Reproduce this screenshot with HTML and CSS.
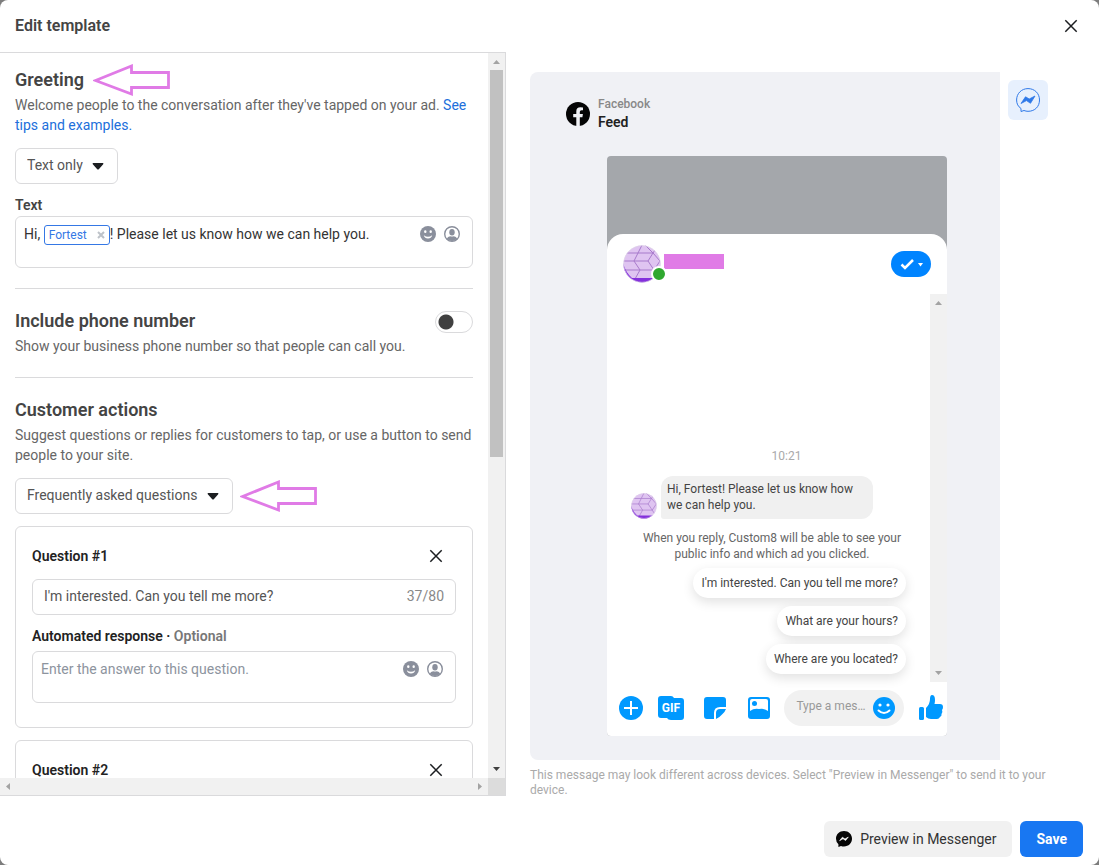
FILE: index.html
```html
<!DOCTYPE html>
<html lang="en">
<head>
<meta charset="utf-8">
<meta name="viewport" content="width=device-width, initial-scale=1">
<title>Edit template</title>
<link rel="stylesheet" href="styles.css">
</head>
<body>
<svg class="defs" width="0" height="0" aria-hidden="true">
  <symbol id="close" viewBox="0 0 14 14"><path d="M1.3 1.3 12.7 12.7M12.7 1.3 1.3 12.7" fill="none" stroke="#1c1e21" stroke-width="1.5"/></symbol>
  <symbol id="arrow" viewBox="0 0 78 32"><path d="M2.5 16.5 38.500 2V8.500H75.500V23.500H38.500V30Z" fill="#fff" stroke="#e07be6" stroke-width="2.8"/></symbol>
  <symbol id="smile" viewBox="0 0 16 16"><circle cx="8" cy="8" r="8" fill="currentColor"/><ellipse cx="5.300" cy="5.700" rx="1.200" ry="1.400" fill="#fff"/><ellipse cx="10.700" cy="5.700" rx="1.200" ry="1.400" fill="#fff"/><path d="M3.800 9.200Q8 12.400 12.200 9.200Q11.300 12.400 8 12.400T3.800 9.200Z" fill="#fff"/></symbol>
  <symbol id="person" viewBox="0 0 16 16"><circle cx="8" cy="8" r="7.300" fill="none" stroke="currentColor" stroke-width="1.400"/><ellipse cx="8" cy="6.300" rx="2.700" ry="3.200" fill="currentColor"/><path d="M2.800 12.800Q3.600 10.300 6.200 10.200Q8 11 9.800 10.200Q12.400 10.300 13.200 12.800Q11 15 8 15T2.800 12.800Z" fill="currentColor"/></symbol>
  <symbol id="avatar" viewBox="0 0 38 38">
    <clipPath id="round"><circle cx="19" cy="19" r="18.500"/></clipPath>
    <g clip-path="url(#round)">
      <path d="M0 0H38V38H0Z" fill="#dfc4f1"/>
      <path d="M0 8H15L19 0M15 8H30L37 16M0 16H11L17 25H31L37 16M0 25H17L12 34M31 25 37 34M15 8 11 16M30 8 25 16H11M25 16 31 25M22 0 30 8 34 2" fill="none" stroke="#a77acb" stroke-width="1"/>
      <path d="M0 18Q3 28 9 33H38V38H0Z" fill="#8430dc"/>
    </g>
    <circle cx="19" cy="19" r="18.300" fill="none" stroke="#ddd3e6" stroke-width=".7"/>
  </symbol>
</svg>
<div class="dialog" role="dialog" aria-labelledby="title">
  <header class="dialog-head">
    <h1 id="title">Edit template</h1>
    <button class="icon-btn" aria-label="Close"><svg width="14" height="14"><use href="#close"/></svg></button>
  </header>
  <div class="main">
    <div class="pane">
      <div class="pane-content">
        <section class="section first">
          <div class="heading-row"><h2>Greeting</h2><svg class="arrow" width="78" height="32"><use href="#arrow"/></svg></div>
          <p class="desc">Welcome people to the conversation after they've tapped on your ad. <a href="#">See tips and examples.</a></p>
          <div class="select-row">
            <span class="select-wrap"><select aria-label="Greeting type"><option>Text only</option></select><svg class="caret" width="12" height="7"><path d="M1 0H11Q12 .5 11 1.500L7 6Q6 7 5 6L1 1.500Q0 .5 1 0Z" fill="#1c1e21"/></svg></span>
          </div>
          <div class="label" id="greet">Text</div>
          <div class="editor">
            <div class="editor-text" role="textbox" aria-labelledby="greet" contenteditable="true">Hi, <span class="token" contenteditable="false">Fortest <svg width="8" height="8"><path d="M1 1 7 7M7 1 1 7" stroke="#bec3c9" stroke-width="2"/></svg></span>! Please let us know how we can help you.</div>
            <div class="tools"><button aria-label="Emoji"><svg width="16" height="16"><use href="#smile"/></svg></button><button aria-label="Personalise"><svg width="16" height="16"><use href="#person"/></svg></button></div>
          </div>
        </section>
        <section class="section phone-section">
          <div class="heading-row spread"><h2><label for="phone">Include phone number</label></h2><input type="checkbox" class="toggle" id="phone"></div>
          <p class="desc">Show your business phone number so that people can call you.</p>
        </section>
        <section class="section">
          <h2>Customer actions</h2>
          <p class="desc">Suggest questions or replies for customers to tap, or use a button to send people to your site.</p>
          <div class="select-row">
            <span class="select-wrap"><select aria-label="Customer action"><option>Frequently asked questions</option></select><svg class="caret" width="12" height="7"><path d="M1 0H11Q12 .5 11 1.500L7 6Q6 7 5 6L1 1.500Q0 .5 1 0Z" fill="#1c1e21"/></svg></span>
            <svg class="arrow" width="78" height="32"><use href="#arrow"/></svg>
          </div>
          <div class="card">
            <div class="card-head"><label for="q1">Question #1</label><button class="icon-btn" aria-label="Remove question 1"><svg width="14" height="14"><use href="#close"/></svg></button></div>
            <div class="field"><input type="text" id="q1" value="I'm interested. Can you tell me more?"><span class="count">37/80</span></div>
            <label class="label response" for="a1">Automated response · <span class="optional">Optional</span></label>
            <div class="editor"><textarea id="a1" rows="1" placeholder="Enter the answer to this question."></textarea>
              <div class="tools"><button aria-label="Emoji"><svg width="16" height="16"><use href="#smile"/></svg></button><button aria-label="Personalise"><svg width="16" height="16"><use href="#person"/></svg></button></div>
            </div>
          </div>
          <div class="card">
            <div class="card-head"><label for="q2">Question #2</label><button class="icon-btn" aria-label="Remove question 2"><svg width="14" height="14"><use href="#close"/></svg></button></div>
            <div class="field"><input type="text" id="q2"></div>
          </div>
        </section>
      </div>
      <div class="bar-v"><svg width="17" height="17"><path d="M5 11H12L8.500 7Z" fill="#a3a3a3"/></svg><div class="track"><div class="thumb"></div></div><svg width="17" height="17"><path d="M5 6H12L8.500 10Z" fill="#404040"/></svg></div>
      <div class="bar-h"><svg width="17" height="17"><path d="M10 5V12L6 8.500Z" fill="#a3a3a3"/></svg><svg width="17" height="17"><path d="M7 5V12L11 8.500Z" fill="#a3a3a3"/></svg></div>
      <div class="corner"></div>
    </div>
    <div class="preview">
      <div class="preview-row">
        <div class="stage">
          <div class="placement">
            <svg width="24" height="24" viewBox="0 0 24 24"><circle cx="12" cy="12" r="12" fill="#050505"/><path d="M10.300 24V15.300H7.200V12H10.300V9.400Q10.300 5.200 14.400 5.200Q16 5.200 17 5.500V8.300H15.500Q13.800 8.300 13.800 10V12H16.900L16.400 15.300H13.800V24Z" fill="#f0f1f5"/></svg>
            <div><div class="platform">Facebook</div><div class="spot">Feed</div></div>
          </div>
          <div class="phone">
            <div class="sheet">
              <div class="chat-head">
                <div class="avatar"><svg width="38" height="38"><use href="#avatar"/></svg><span class="online"></span></div>
                <div class="name"></div>
                <button class="pill" aria-label="Options"><svg width="40" height="26"><path d="M10.500 13.500 14 17 22 9" fill="none" stroke="#fff" stroke-width="2.500"/><path d="M27 12H32L29.500 15.500Z" fill="#fff"/></svg></button>
              </div>
              <div class="chat-body">
                <div class="messages">
                  <div class="time">10:21</div>
                  <div class="incoming"><svg width="26" height="26"><use href="#avatar"/></svg><div class="bubble">Hi, Fortest! Please let us know how we can help you.</div></div>
                  <p class="notice">When you reply, Custom8 will be able to see your public info and which ad you clicked.</p>
                  <div class="replies"><button>I'm interested. Can you tell me more?</button><button>What are your hours?</button><button>Where are you located?</button></div>
                </div>
                <div class="bar-v chat-bar"><svg width="17" height="17"><path d="M5 11H12L8.500 7Z" fill="#a3a3a3"/></svg><svg width="17" height="17"><path d="M5 6H12L8.500 10Z" fill="#a3a3a3"/></svg></div>
              </div>
              <div class="composer">
                <button aria-label="More"><svg width="24" height="24"><circle cx="12" cy="12" r="12" fill="#0099ff"/><path d="M5 12H19M12 5V19" stroke="#fff" stroke-width="2"/></svg></button>
                <button class="gif" aria-label="GIF"><svg width="26" height="24"><path d="M3 0H13Q15 0 16 2H23Q26 2 26 5V21Q26 24 23 24H13Q10 24 9 22H3Q0 22 0 19V3Q0 0 3 0Z" fill="#0099ff"/><text x="13" y="16">GIF</text></svg></button>
                <button class="sticker" aria-label="Sticker"><svg width="22" height="22"><path d="M3 0H19Q22 0 22 3V10H16Q10 10 10 16V22H3Q0 22 0 19V3Q0 0 3 0Z" fill="#0099ff"/><path d="M12 22V16Q12 12 16 12H22Q21 15 18 17.500Q15 21 12 22Z" fill="#0099ff"/></svg></button>
                <button aria-label="Photo"><svg width="22" height="22"><path d="M3 0H19Q22 0 22 3V19Q22 22 19 22H3Q0 22 0 19V3Q0 0 3 0Z" fill="#0099ff"/><path d="M2 4Q2 2 4 2H18Q20 2 20 4V14Q16 11 11 12Q6 11 2 14Z" fill="#fff"/><circle cx="6.500" cy="6.500" r="2.500" fill="#0099ff"/></svg></button>
                <div class="type"><input type="text" aria-label="Message" placeholder="Type a message..."><svg width="22" height="22" viewBox="0 0 22 22"><circle cx="11" cy="11" r="11" fill="#0099ff"/><circle cx="7" cy="8" r="1.600" fill="#fff"/><circle cx="15" cy="8" r="1.600" fill="#fff"/><path d="M5.500 13.500Q11 18.500 16.500 13.500" fill="none" stroke="#fff" stroke-width="2" stroke-linecap="round"/></svg></div>
                <button aria-label="Like"><svg width="24" height="26"><rect x="0" y="12" width="5" height="13" rx="1.500" fill="#0099ff"/><path d="M7 13Q11 9 11 4Q11 0 13 0Q16 0 16 5Q16 7 15.500 9H21Q24 9 24 12Q24 14 23 15Q24 17 22.500 19Q23 21 21 22Q20 24 18 24H12Q9 24 7 22Z" fill="#0099ff"/></svg></button>
              </div>
            </div>
          </div>
        </div>
        <button class="side-tab" aria-label="Messenger"><svg width="24" height="24"><path d="M5 20.500V23.500L8 22.500Q10 23.300 12 23.300C19 23.300 23.500 18.500 23.500 12C23.500 5.200 18.500.6 12 .6C5.500.6.6 5.500.6 12Q.6 17.500 5 20.500Z" fill="none" stroke="#2f79e8"/><path d="M5 15.500 9.500 8.800 13.200 11 19 8 14.500 15.300 10.500 12.600Z" fill="#2f79e8" stroke="#2f79e8" stroke-width=".8"/></svg></button>
      </div>
      <p class="caption">This message may look different across devices. Select "Preview in Messenger" to send it to your device.</p>
    </div>
  </div>
  <footer class="foot">
    <button class="btn"><svg width="16" height="16"><path d="M8 0C3.400 0 0 3.300 0 7.700Q0 11 2.400 13.300V16L5 14.900Q6.400 15.400 8 15.400C12.600 15.400 16 12.100 16 7.700S12.600 0 8 0Z" fill="#050505"/><path d="M3.600 9.700 6.400 6.200 9 8 12.300 6 9.600 9.500 7 7.700Z" fill="#fff" stroke="#fff" stroke-width=".6"/></svg>Preview in Messenger</button>
    <button class="btn primary">Save</button>
  </footer>
</div>
</body>
</html>
```
FILE: styles.css
```css
*{box-sizing:border-box}
body{margin:0;background:#7d7d7d;font:14px/20px Roboto,"Liberation Sans",sans-serif;color:#444}
button,input,select,textarea{font:inherit;color:inherit}
button{background:none;border:0;padding:0;cursor:pointer}
h1,h2,p{margin:0}
svg{display:block;flex:none}
.defs{position:absolute}
a{color:#216fdb;text-decoration:none}
.dialog{height:100vh;display:flex;flex-direction:column;background:#fff;border-radius:8px;overflow:hidden}
.dialog-head{height:52px;flex:none;display:flex;align-items:center;justify-content:space-between;padding:0 21px 0 15px}
h1{font-size:16px;line-height:20px;font-weight:600;color:#444}
.main{flex:1;min-height:0;display:flex}
.pane{flex:0 0 506px;max-width:60%;display:grid;grid-template:minmax(0,1fr) 17px/minmax(0,1fr) 17px;border:1px solid #dadadc;border-left:0}
.pane-content{overflow:hidden;padding:0 15px}
.section{padding:20px 0;border-top:1px solid #dadadc}
.section.first{border-top:0;padding-top:15px}
.phone-section{padding-bottom:21px}
h2{font-size:18px;line-height:24px;font-weight:600;color:#444;margin-bottom:3px}
.heading-row{display:flex;align-items:center;gap:9px;margin-bottom:3px}
.heading-row h2{margin:0}
.heading-row.spread{justify-content:space-between}
.arrow{margin-block:-8px}
.desc{color:#666}
.select-row{display:flex;align-items:center;gap:7px;margin:13px 0 12px}
.select-wrap{display:inline-grid;align-items:center}
.select-wrap>*{grid-area:1/1}
select{appearance:none;background:#fff;border:1px solid #dadadc;border-radius:6px;height:36px;padding:0 34px 2px 11px;color:#555}
.caret{justify-self:end;margin-right:14px;pointer-events:none}
.label{display:block;font-weight:600;margin:-1px 0 1px}
.editor{display:flex;justify-content:space-between;min-height:52px;border:1px solid #dadadc;border-radius:6px;padding:7px 12px 7px 8px;color:#333}
.editor-text{outline:0}
.token{display:inline-flex;align-items:center;gap:10px;height:20px;border:1px solid #3578e5;border-radius:3px;padding:0 4px;font-size:12px;line-height:18px;color:#3578e5;vertical-align:middle}
.tools{display:flex;gap:8px;align-items:flex-start;margin-top:2px;color:#8a8f9c}
.toggle{appearance:none;width:38px;height:22px;margin:0;border:1px solid #dadadc;border-radius:11px;background:radial-gradient(circle at 10px 10px,#404040 7px,transparent 8px);align-self:flex-end}
.card{border:1px solid #dadadc;border-radius:6px;padding:19px 16px 24px;margin-bottom:12px}
.card-head{display:flex;justify-content:space-between;align-items:center;font-weight:600;color:#222;padding-right:13px;margin-bottom:13px}
.field{display:flex;align-items:center;height:36px;border:1px solid #dadadc;border-radius:6px;padding:0 11px 2px}
.field input{flex:1;min-width:0;border:0;outline:0;padding:0;background:none;color:#555}
.count{color:#888}
.response{color:#222;margin:11px 0 5px}
.optional{color:#777}
textarea{flex:1;border:0;outline:0;padding:0;resize:none;background:none;overflow:hidden}
textarea::placeholder{color:#8d949e}
.bar-v{background:#f1f1f1;display:flex;flex-direction:column;justify-content:space-between}
.track{flex:1}
.thumb{height:56%;margin:0 2px;background:#c1c1c1}
.bar-h{background:#f1f1f1;display:flex;justify-content:space-between}
.corner{background:#dcdcdc}
.preview{flex:1;min-width:0;padding:20px 51px 0 24px}
.preview-row{display:flex;align-items:flex-start;gap:8px}
.stage{flex:1;background:#f0f1f5;border-radius:8px 0 0 8px;padding:24px 53px 24px 36px}
.placement{display:flex;align-items:center;gap:8px}
.platform{font-size:12px;line-height:16px;font-weight:500;color:#888}
.spot{font-weight:600;line-height:20px;color:#222}
.phone{margin:24px 0 0 41px;padding-top:78px;background:#a4a7ab;border-radius:4px;overflow:hidden}
.sheet{background:#fff;border-radius:16px 16px 0 0}
.chat-head{height:60px;display:flex;align-items:center;padding:0 16px}
.avatar{position:relative}
.online{position:absolute;right:-6px;bottom:1px;width:16px;height:16px;border:2px solid #fff;border-radius:50%;background:#2fa82f}
.name{width:60px;height:15px;margin:0 auto 6px 3px;background:#e07be6}
.pill{background:#0084ff;border-radius:13px}
.chat-body{display:flex;min-height:388px}
.messages{flex:1;display:flex;flex-direction:column;justify-content:flex-end;font-size:12px;line-height:16px;padding:0 24px 8px}
.time{text-align:center;color:#aaa;margin:0 0 12px 36px}
.incoming{display:flex;align-items:flex-end;gap:4px}
.bubble{background:#f0f0f0;border-radius:12px 12px 12px 3px;width:212px;padding:5px 6px 6px;color:#444}
.notice{text-align:center;color:#666;margin:11px 0 6px;padding:0 0 0 7px}
.replies{display:flex;flex-direction:column;align-items:flex-end;gap:8px}
.replies button{height:30px;border-radius:15px;padding:0 8px;background:#fff;box-shadow:0 4px 12px rgba(0,0,0,.12);color:#444}
.chat-bar{width:17px}
.composer{height:54px;display:flex;align-items:center;justify-content:space-between;padding:0 4px 2px 12px}
.gif text{font:bold 12px Roboto,sans-serif;fill:#fff;text-anchor:middle}
.sticker{margin:0 7px 0 6px}
.type{display:flex;align-items:center;gap:6px;width:120px;height:36px;border-radius:18px;background:#f1f1f1;padding:0 9px 0 12px}
.type input{flex:1;min-width:0;border:0;outline:0;padding:0 0 4px;background:none;font-size:12px;text-overflow:ellipsis}
.type input::placeholder{color:#999}
.side-tab{width:40px;height:40px;margin-top:8px;border-radius:6px;background:#e7f0fd;display:grid;place-items:center}
.caption{font-size:12px;line-height:15px;color:#aaa;margin-top:8px}
.foot{flex:none;height:69px;display:flex;align-items:flex-start;justify-content:flex-end;gap:8px;padding:25px 16px 0}
.btn{display:flex;align-items:center;gap:8px;height:36px;border-radius:6px;padding:0 16px 0 12px;background:#f1f1f1;color:#333}
.btn.primary{background:#1877f2;color:#fff;font-weight:700;padding:0 16px}
```
